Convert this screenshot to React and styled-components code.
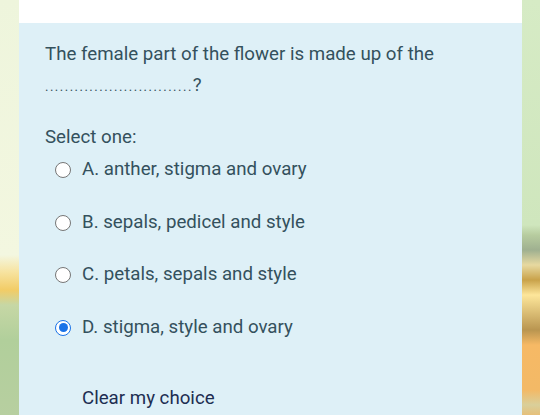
import React from "react";
import styled, { createGlobalStyle } from "styled-components";

const GlobalStyle = createGlobalStyle`
  html, body {
    margin: 0;
    padding: 0;
    height: 100%;
  }
  body {
    font-family: Roboto, "Liberation Sans", sans-serif;
    background: #eef5dc;
  }
`;

const Page = styled.div`
  display: grid;
  grid-template-columns: 19px 1fr 18px;
  height: 415px;
  overflow: hidden;
`;

const Side = styled.div`
  background: ${p => p.$right
    ? "linear-gradient(180deg, #d6ebc5 0px, #cfe6bd 225px, #b7cc9f 235px, #9fb090 250px, #e7d9a0 265px, #c9a24a 280px, #fde69a 295px, #b99550 330px, #f6b965 345px, #f3b966 390px, #d9cf9a 405px, #e6c07a 415px)"
    : "linear-gradient(180deg, #eef5dc 0px, #f3f7e0 255px, #f7e3a0 272px, #f2cc66 290px, #c6d7a5 305px, #b1cf9b 340px, #b7cfa0 415px)"};
`;

const Card = styled.div`
  display: flex;
  flex-direction: column;
  background: #ffffff;
`;

const TopStrip = styled.div`
  height: 23px;
  background: #ffffff;
`;

const Panel = styled.div`
  flex: 1;
  background: #def0f7;
  padding: 16px 0 0 26px;
  color: #34515d;
`;

const Question = styled.div`
  font-size: 18.7px;
  line-height: 31px;
`;

const Dots = styled.span`
  font-size: 13px;
  letter-spacing: 1.5px;
`;

const Prompt = styled.div`
  font-size: 18.7px;
  margin-top: 24px;
  line-height: 22px;
`;

const Options = styled.div`
  display: flex;
  flex-direction: column;
  gap: 30.5px;
  margin-top: 10px;
  padding-left: 10px;
`;

const Option = styled.label`
  display: flex;
  align-items: center;
  height: 22px;
  font-size: 18.7px;
  gap: 11px;
`;

const Radio = styled.span`
  width: 16px;
  height: 16px;
  border-radius: 50%;
  box-sizing: border-box;
  border: 1.5px solid ${p => (p.$checked ? "#1a73e8" : "#767676")};
  background: #ffffff;
  display: flex;
  align-items: center;
  justify-content: center;
  margin-top: 2px;

  &::after {
    content: "";
    width: 9px;
    height: 9px;
    border-radius: 50%;
    background: ${p => (p.$checked ? "#1a73e8" : "transparent")};
  }
`;

const ClearLink = styled.div`
  margin-top: 49px;
  padding-left: 37px;
  font-size: 18.7px;
  line-height: 22px;
  color: #1d2e52;
`;

const options = [
  { key: "a", text: "A. anther, stigma and ovary" },
  { key: "b", text: "B. sepals, pedicel and style" },
  { key: "c", text: "C. petals, sepals and style" },
  { key: "d", text: "D. stigma, style and ovary", checked: true },
];

export default function App() {
  return (
    <>
      <GlobalStyle />
      <Page>
        <Side />
        <Card>
          <TopStrip />
          <Panel>
            <Question>
              The female part of the flower is made up of the
              <br />
              <Dots>..............................</Dots>?
            </Question>
            <Prompt>Select one:</Prompt>
            <Options>
              {options.map(o => (
                <Option key={o.key}>
                  <Radio $checked={o.checked} />
                  <span>{o.text}</span>
                </Option>
              ))}
            </Options>
            <ClearLink>Clear my choice</ClearLink>
          </Panel>
        </Card>
        <Side $right />
      </Page>
    </>
  );
}
